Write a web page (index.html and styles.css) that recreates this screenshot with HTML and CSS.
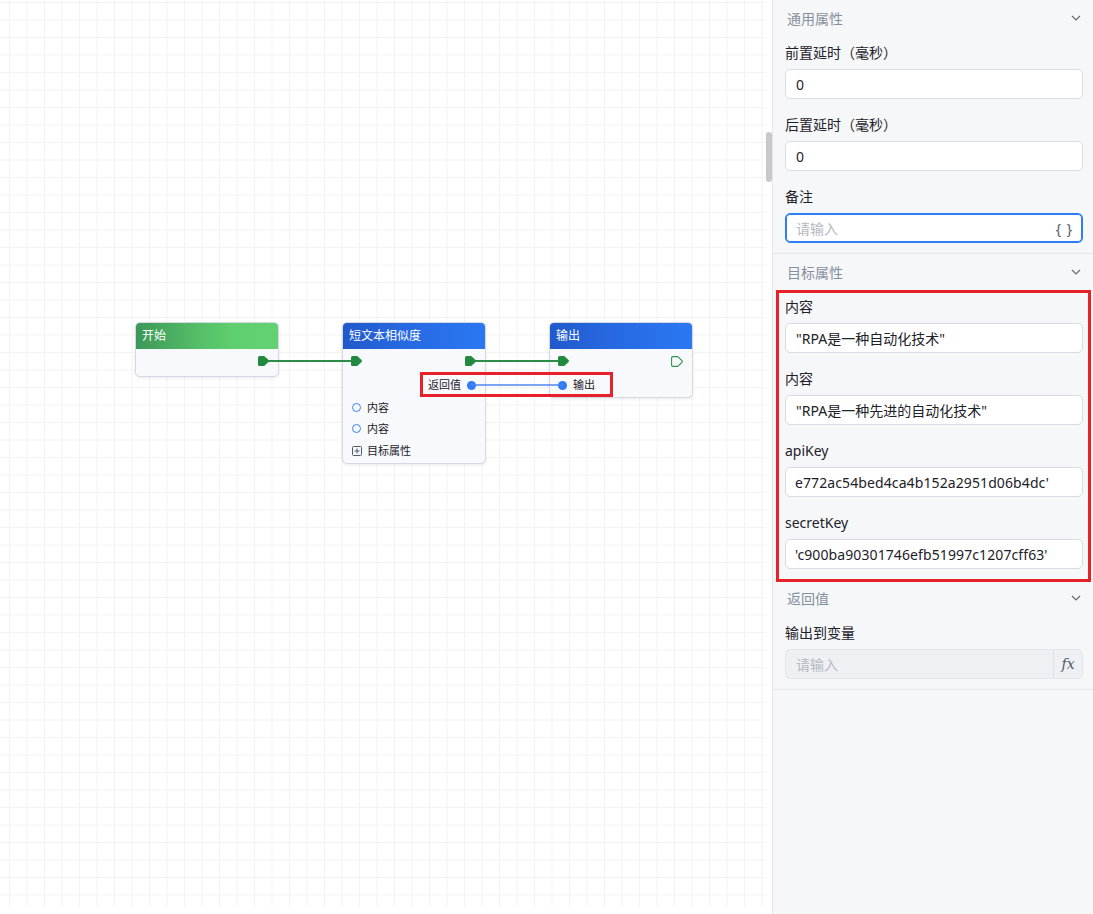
FILE: index.html
```html
<!DOCTYPE html>
<html lang="zh-CN">
<head>
<meta charset="utf-8">
<title>流程编辑</title>
<link rel="stylesheet" href="styles.css">
</head>
<body>
<div class="app">
  <div class="canvas">
    <div class="grid">
      <div class="node n-start">
        <div class="node-head head-green">开始</div>
        <div class="node-body">
          <div class="row row-port end">
            <svg class="port" width="11" height="10" viewBox="0 0 11 10"><path d="M1.5 0H6.2L10.6 4.1Q11.2 5 10.6 5.9L6.2 10H1.5Q0 10 0 8.5V1.5Q0 0 1.5 0Z" fill="#228a3f"/></svg>
          </div>
        </div>
      </div>

      <div class="node n-sim">
        <div class="node-head head-blue">短文本相似度</div>
        <div class="node-body">
          <div class="row row-port between">
            <svg class="port" width="11" height="10" viewBox="0 0 11 10"><path d="M1.5 0H6.2L10.6 4.1Q11.2 5 10.6 5.9L6.2 10H1.5Q0 10 0 8.5V1.5Q0 0 1.5 0Z" fill="#228a3f"/></svg>
            <svg class="port" width="11" height="10" viewBox="0 0 11 10"><path d="M1.5 0H6.2L10.6 4.1Q11.2 5 10.6 5.9L6.2 10H1.5Q0 10 0 8.5V1.5Q0 0 1.5 0Z" fill="#228a3f"/></svg>
          </div>
          <div class="row row-out end"><span>返回值</span><i class="dot"></i></div>
          <div class="row row-in"><i class="ring"></i><span>内容</span></div>
          <div class="row row-in"><i class="ring"></i><span>内容</span></div>
          <div class="row row-foot">
            <svg class="plus" width="10" height="10" viewBox="0 0 10 10"><rect x="0.5" y="0.5" width="9" height="9" rx="1" fill="none" stroke="#4e5969"/><path d="M2.5 5H7.5M5 2.5V7.5" stroke="#4e5969"/></svg>
            <span>目标属性</span>
          </div>
        </div>
      </div>

      <div class="node n-out">
        <div class="node-head head-blue">输出</div>
        <div class="node-body">
          <div class="row row-port between">
            <svg class="port" width="11" height="10" viewBox="0 0 11 10"><path d="M1.5 0H6.2L10.6 4.1Q11.2 5 10.6 5.9L6.2 10H1.5Q0 10 0 8.5V1.5Q0 0 1.5 0Z" fill="#228a3f"/></svg>
            <svg class="port" width="12" height="11" viewBox="0 0 12 11"><path d="M2 0.6H6.6L11 4.6Q11.5 5.5 11 6.4L6.6 10.4H2Q0.6 10.4 0.6 9V2Q0.6 0.6 2 0.6Z" fill="none" stroke="#2a9a4a" stroke-width="1.1"/></svg>
          </div>
          <div class="row row-in"><i class="dot"></i><span>输出</span></div>
        </div>
      </div>

      <svg class="edges" width="766" height="907" viewBox="0 0 766 907">
        <path d="M268 361H352" stroke="#2e8c48" stroke-width="2" fill="none"/>
        <path d="M475 361H559" stroke="#2e8c48" stroke-width="2" fill="none"/>
        <path d="M471 385H563" stroke="#4f86ee" stroke-width="1.4" fill="none"/>
      </svg>

      <div class="mark mark-canvas"></div>
    </div>
    <div class="thumb"></div>
  </div>

  <aside class="panel">
    <section class="sec">
      <div class="sec-head"><span>通用属性</span><svg class="chev" width="10" height="6" viewBox="0 0 10 6"><path d="M1 1L5 5L9 1" fill="none" stroke="#5f6b7a" stroke-width="1.2"/></svg></div>
      <div class="sec-body">
        <div class="field"><div class="label">前置延时（毫秒）</div><div class="input"><span class="val">0</span></div></div>
        <div class="field"><div class="label">后置延时（毫秒）</div><div class="input"><span class="val">0</span></div></div>
        <div class="field"><div class="label">备注</div><div class="input focus"><span class="ph">请输入</span><span class="brace">{ }</span></div></div>
      </div>
    </section>

    <section class="sec">
      <div class="sec-head"><span>目标属性</span><svg class="chev" width="10" height="6" viewBox="0 0 10 6"><path d="M1 1L5 5L9 1" fill="none" stroke="#5f6b7a" stroke-width="1.2"/></svg></div>
      <div class="sec-body">
        <div class="field"><div class="label">内容</div><div class="input"><span class="val">"RPA是一种自动化技术"</span></div></div>
        <div class="field"><div class="label">内容</div><div class="input"><span class="val">"RPA是一种先进的自动化技术"</span></div></div>
        <div class="field"><div class="label">apiKey</div><div class="input"><span class="val wide">e772ac54bed4ca4b152a2951d06b4dc'</span></div></div>
        <div class="field"><div class="label">secretKey</div><div class="input"><span class="val wide">'c900ba90301746efb51997c1207cff63'</span></div></div>
      </div>
    </section>

    <section class="sec">
      <div class="sec-head"><span>返回值</span><svg class="chev" width="10" height="6" viewBox="0 0 10 6"><path d="M1 1L5 5L9 1" fill="none" stroke="#5f6b7a" stroke-width="1.2"/></svg></div>
      <div class="sec-body">
        <div class="field"><div class="label">输出到变量</div><div class="input disabled"><span class="ph">请输入</span><span class="fx">fx</span></div></div>
      </div>
    </section>

    <div class="mark mark-panel"></div>
  </aside>
</div>
</body>
</html>
```

FILE: styles.css
```css
* { box-sizing: border-box; }
html, body { margin: 0; padding: 0; }
body {
  font-family: "Noto Sans", "Noto Sans CJK SC", sans-serif;
  color: #1d2129;
  background: #fff;
}
.app {
  display: flex;
  width: 1093px;
  height: 914px;
  overflow: hidden;
}
.canvas {
  position: relative;
  width: 772px;
  height: 914px;
  background: #fff;
  flex: none;
}
.grid {
  position: relative;
  width: 766px;
  height: 907px;
  background-color: #fff;
  background-image:
    linear-gradient(to right, #f3f3f3 1px, transparent 1px),
    linear-gradient(to bottom, #f3f3f3 1px, transparent 1px);
  background-size: 17.5px 17.5px;
  background-position: 9px 2px;
}
.thumb {
  position: absolute;
  left: 766px;
  top: 132px;
  width: 6px;
  height: 50px;
  border-radius: 3px;
  background: #c8c8c8;
}

/* nodes */
.node {
  position: absolute;
  width: 144px;
  border: 1px solid #d6d9e1;
  border-radius: 5px;
  background: #f8f9fd;
  box-shadow: 0 1px 3px rgba(30, 40, 70, 0.10);
  overflow: hidden;
  font-size: 11px;
  line-height: 14px;
}
.n-start { left: 135px; top: 322px; }
.n-sim { left: 342px; top: 322px; }
.n-out { left: 549px; top: 322px; }

.node-head {
  height: 26px;
  padding: 0 6px;
  font-size: 12px;
  line-height: 26px;
  color: #fff;
}
.head-green { background: linear-gradient(90deg, #3d9858 0%, #55bf68 45%, #5fd070 70%, #62d172 100%); }
.head-blue { background: linear-gradient(90deg, #2159cb 0%, #2668e0 40%, #2b78f3 100%); }

.node-body { display: flex; flex-direction: column; }
.row {
  display: flex;
  align-items: center;
  padding: 0 9px 0 8px;
  gap: 6px;
}
.row.end { justify-content: flex-end; }
.row.between { justify-content: space-between; }
.row-port { height: 24px; }
.n-start .node-body { padding-bottom: 3px; }
.row-out { height: 24px; }
.row-in { height: 21px; }
.n-out .row-in { height: 24px; }
.row-foot { height: 24px; gap: 5px; padding-left: 9px; font-size: 11px; }
.row-foot span { color: #1d2129; }
.port { display: block; flex: none; }
.plus { display: block; flex: none; }
.dot {
  display: block;
  flex: none;
  width: 9px;
  height: 9px;
  border-radius: 50%;
  background: #2f7df6;
}
.ring {
  display: block;
  flex: none;
  width: 9px;
  height: 9px;
  border-radius: 50%;
  border: 1.3px solid #3a84f5;
  margin-left: 1px;
}
.edges {
  position: absolute;
  left: 0;
  top: 0;
  pointer-events: none;
}
.mark {
  position: absolute;
  border: 3px solid #e8202a;
  pointer-events: none;
}
.mark-canvas { left: 420px; top: 372px; width: 193px; height: 25px; }

/* panel */
.panel {
  position: relative;
  flex: none;
  width: 321px;
  height: 914px;
  background: #f6f7f9;
  border-left: 1px solid #e3e5ea;
}
.sec { border-bottom: 1px solid #e5e6eb; }
.sec-head {
  height: 36px;
  display: flex;
  align-items: center;
  justify-content: space-between;
  padding: 0 12px 0 14px;
  font-size: 14px;
  color: #86909c;
}
.chev { display: block; }
.sec-body {
  display: flex;
  flex-direction: column;
  gap: 15px;
  padding: 6px 10px 10px 12px;
}
.field { display: flex; flex-direction: column; gap: 5px; }
.label {
  height: 22px;
  line-height: 22px;
  font-size: 14px;
  color: #1d2129;
}
.input {
  height: 30px;
  display: flex;
  align-items: center;
  justify-content: space-between;
  padding: 0 10px;
  background: #fff;
  border: 1px solid #d8dce4;
  border-radius: 5px;
  font-size: 14px;
  color: #1d2129;
  white-space: nowrap;
  overflow: hidden;
}
.val.wide { margin-left: -1px; letter-spacing: 0.1px; }
.input.focus {
  border-color: #2e7cf6;
  box-shadow: inset 0 0 0 1px #2e7cf6;
}
.ph { color: #b3b8c1; }
.brace { color: #4e5969; font-size: 14px; letter-spacing: 1px; margin-right: -1px; }
.input.disabled {
  background: #eff0f3;
  border-color: #e2e5eb;
  padding-right: 0;
}
.fx {
  width: 29px;
  height: 100%;
  display: flex;
  align-items: center;
  justify-content: center;
  border-left: 1px solid #dcdfe5;
  font-family: "DejaVu Serif", "Liberation Serif", serif;
  font-style: italic;
  font-size: 14px;
  color: #4e5969;
}
.mark-panel { left: 3px; top: 290px; width: 315px; height: 292px; }
```
